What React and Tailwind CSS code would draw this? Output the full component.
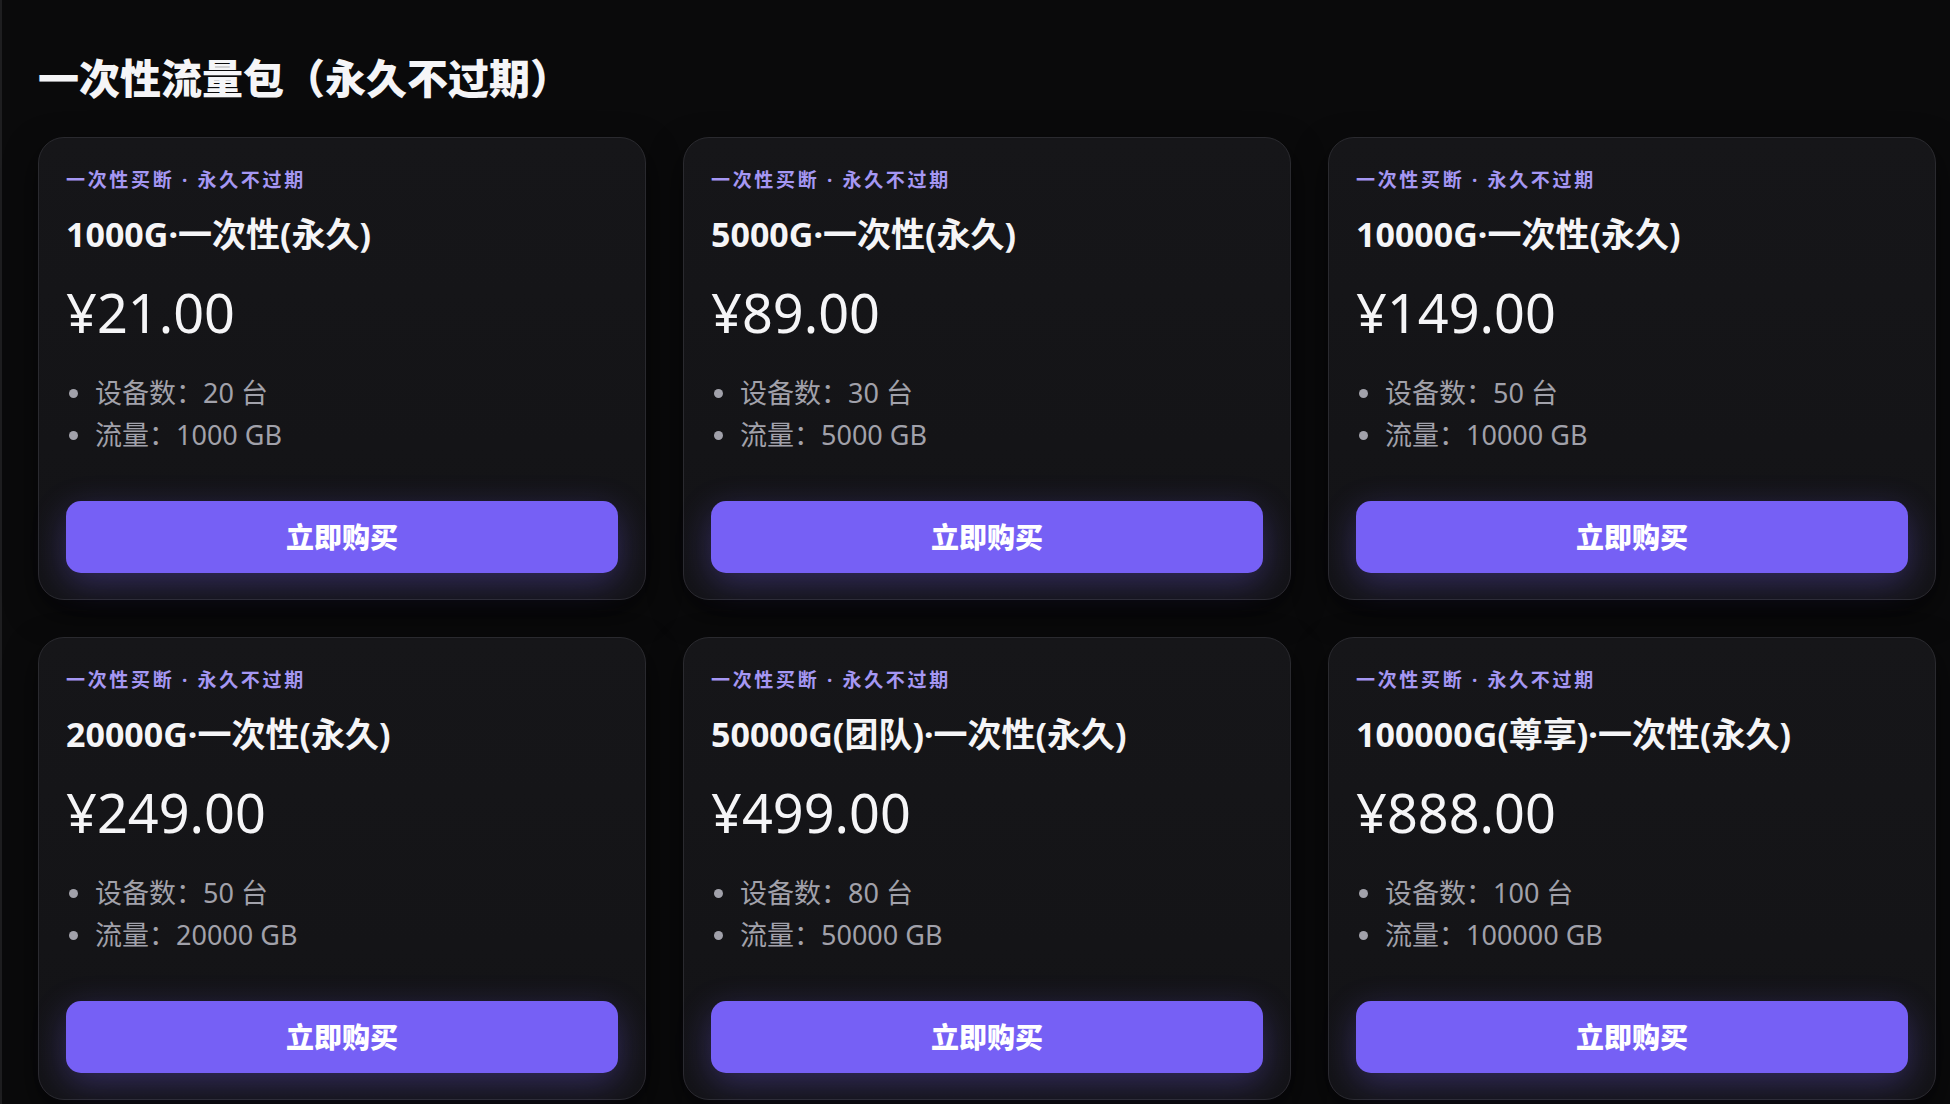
import React from 'react';

const plans = [
    { name: '1000G·一次性(永久)', price: '¥21.00', devices: '20 台', traffic: '1000 GB' },
    { name: '5000G·一次性(永久)', price: '¥89.00', devices: '30 台', traffic: '5000 GB' },
    { name: '10000G·一次性(永久)', price: '¥149.00', devices: '50 台', traffic: '10000 GB' },
    { name: '20000G·一次性(永久)', price: '¥249.00', devices: '50 台', traffic: '20000 GB' },
    { name: '50000G(团队)·一次性(永久)', price: '¥499.00', devices: '80 台', traffic: '50000 GB' },
    { name: '100000G(尊享)·一次性(永久)', price: '¥888.00', devices: '100 台', traffic: '100000 GB' },
];

const PlanCard = ({ plan }) => {
    return (
        <div className="flex flex-col h-[463px] rounded-[26px] border border-[#2a2a2f] bg-gradient-to-b from-[#161619] to-[#131316] px-[27px] pt-[29px] pb-[26px] shadow-[0_12px_32px_rgba(0,0,0,0.55)]">
            <div className="text-[19px] leading-[26px] font-bold tracking-[0.14em] text-[#a597f3]">
                一次性买断 · 永久不过期
            </div>
            <h2 className="mt-[20px] text-[34px] leading-[42px] font-bold text-[#f5f5f7]">{plan.name}</h2>
            <div className="mt-[25px] text-[54px] leading-[64px] font-normal text-[#f5f5f7]">{plan.price}</div>
            <ul className="mt-[28px] text-[27px] leading-[42px] text-[#a1a1aa]">
                <li className="flex items-center">
                    <span className="w-[9px] h-[9px] rounded-full bg-[#a1a1aa] ml-[3px] mr-[17px]"></span>
                    设备数：{plan.devices}
                </li>
                <li className="flex items-center">
                    <span className="w-[9px] h-[9px] rounded-full bg-[#a1a1aa] ml-[3px] mr-[17px]"></span>
                    流量：{plan.traffic}
                </li>
            </ul>
            <button className="mt-auto h-[72px] w-full rounded-[15px] bg-[#7660f5] text-[28px] font-extrabold text-white shadow-[0_10px_34px_rgba(118,96,245,0.32)]">
                立即购买
            </button>
        </div>
    );
};

const App = () => {
    return (
        <div
            className="min-h-[1104px] w-full bg-[#0a0a0b] border-l-2 border-[#1e1e20]"
            style={{ fontFamily: '"Noto Sans", "Noto Sans CJK SC", sans-serif' }}
        >
            <div className="pl-[36px] pr-[14px] pt-[52px]">
                <h1 className="text-[41px] leading-[52px] font-extrabold text-[#f5f5f7]">一次性流量包（永久不过期）</h1>
                <div className="mt-[33px] grid grid-cols-3 gap-[37px]">
                    {plans.map((plan) => (
                        <PlanCard key={plan.name} plan={plan} />
                    ))}
                </div>
            </div>
        </div>
    );
};

export default App;
